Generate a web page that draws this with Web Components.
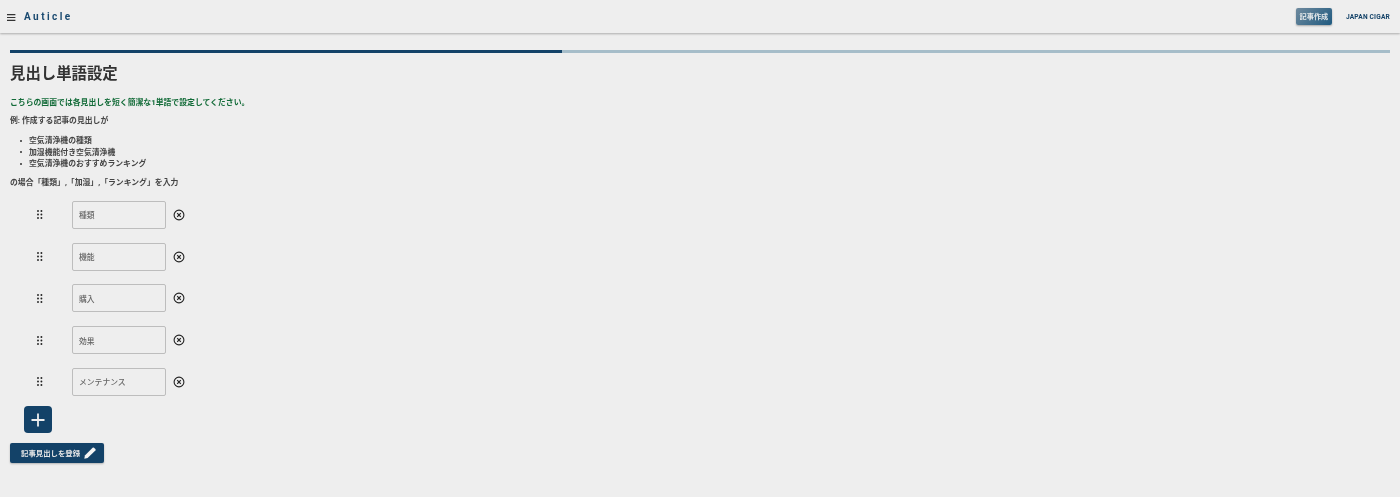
<!DOCTYPE html>
<html lang="ja"><head><meta charset="utf-8"><title>Auticle</title>
<style>
html,body{margin:0;padding:0;background:#eeeeee;height:100%;overflow:hidden}
body{font-family:Roboto,"Noto Sans CJK JP",sans-serif;color:#333;filter:blur(.35px)}
</style></head><body>
<app-header></app-header>
<app-page>
  <step-progress value="40"></step-progress>
  <h-title>見出し単語設定</h-title>
  <help-text></help-text>
  <word-list></word-list>
  <add-button></add-button>
  <submit-button>記事見出しを登録</submit-button>
</app-page>
<script>
const FONT='Roboto,"Noto Sans CJK JP",sans-serif';
function def(name,html,init){
  customElements.define(name,class extends HTMLElement{
    constructor(){super();this.attachShadow({mode:'open'}).innerHTML=html;}
    connectedCallback(){if(init)init(this);}
  });
}
def('app-header',`<style>
:host{display:flex;align-items:center;height:33px;box-sizing:border-box;background:#eeeeee;box-shadow:0 1px 2px rgba(0,0,0,.28);padding:0 10px 0 7px;font-family:${FONT}}
svg{display:block;width:9px;height:7px;margin-right:8px;margin-top:1px}
.logo{font-size:10px;font-weight:700;letter-spacing:2.45px;color:#1a4a70;flex:1}
.new{background:linear-gradient(135deg,#6f8a9e,#1f5a80);color:#e4e8ea;font-size:7.2px;font-weight:700;height:17px;width:36px;display:flex;align-items:center;justify-content:center;border-radius:2px;box-shadow:0 1px 2px rgba(0,0,0,.3);margin-right:14px;margin-top:-1px}
.user{font-size:6.6px;font-weight:700;color:#134268;letter-spacing:.2px}
</style><svg viewBox="0 0 9 7"><path d="M0 .6h8.4M0 3.5h8.4M0 6.4h8.4" stroke="#333" stroke-width="1.1" fill="none"/></svg>
<span class="logo">Auticle</span><span class="new">記事作成</span><span class="user">JAPAN CIGAR</span>`);
def('app-page',`<style>:host{display:flex;flex-direction:column;align-items:flex-start;padding:17px 10px 0}</style><slot></slot>`);
def('step-progress',`<style>:host{display:flex;width:100%;height:3px;background:#a6bdc9}
i{display:block;width:40%;background:#134268}</style><i></i>`);
def('h-title',`<style>:host{display:block;font-family:${FONT};font-size:15.4px;line-height:20px;font-weight:700;color:#333;margin-top:11px}</style><slot></slot>`);
def('help-text',`<style>
:host{display:block;font-family:${FONT};font-size:7.85px;font-weight:700;color:#444;margin-top:13px;line-height:11px}
p{margin:0}.g{color:#126b38;font-weight:700;margin-bottom:7px}
ul{margin:9px 0 7px;padding:0;line-height:11.5px;list-style:none}
li{display:flex;align-items:center}
li::before{content:"";width:2px;height:2px;border-radius:50%;background:#333;margin:0 7px 0 10px}
</style><p class="g">こちらの画面では各見出しを短く簡潔な1単語で設定してください。</p>
<p>例: 作成する記事の見出しが</p>
<ul><li>空気清浄機の種類</li><li>加湿機能付き空気清浄機</li><li>空気清浄機のおすすめランキング</li></ul>
<p>の場合「種類」,「加湿」,「ランキング」を入力</p>`);
def('word-row',`<style>
:host{display:flex;align-items:center;height:28px;margin-bottom:13.75px;font-family:${FONT}}
.h{width:6px;height:9px;margin:0 29px 0 27px;display:block}
.f{box-sizing:border-box;width:94px;height:28px;border:1px solid #bdbdbd;border-radius:2px;display:flex;align-items:center;padding-left:6px;font-size:7.8px;font-weight:500;color:#666}
.x{width:12px;height:12px;margin-left:7px;display:block}
</style><svg class="h" viewBox="0 0 6 9"><g fill="#222"><circle cx="1" cy="1" r=".95"/><circle cx="4.4" cy="1" r=".95"/><circle cx="1" cy="4.5" r=".95"/><circle cx="4.4" cy="4.5" r=".95"/><circle cx="1" cy="8" r=".95"/><circle cx="4.4" cy="8" r=".95"/></g></svg>
<div class="f"><slot></slot></div>
<svg class="x" viewBox="0 0 12 12"><circle cx="6" cy="6" r="4.9" fill="none" stroke="#222" stroke-width="1.1"/><path d="M4.2 4.2l3.6 3.6M7.8 4.2l-3.6 3.6" stroke="#222" stroke-width="1.2"/></svg>`);
def('word-list',`<style>:host{display:block;margin-top:13.25px}</style><word-row>種類</word-row><word-row>機能</word-row><word-row>購入</word-row><word-row>効果</word-row><word-row>メンテナンス</word-row>`);
def('add-button',`<style>:host{display:flex;align-items:center;justify-content:center;width:28px;height:27px;background:#134268;border-radius:4px;margin:-3.25px 0 0 14px}svg{width:16px;height:16px;display:block}</style>
<svg viewBox="0 0 16 16"><path d="M8 1.5v13M1.5 8h13" stroke="#eee" stroke-width="1.8" fill="none"/></svg>`);
def('submit-button',`<style>:host{display:flex;align-items:center;box-sizing:border-box;width:94px;height:20px;background:#134268;color:#e8e8e8;border-radius:2px;box-shadow:0 1px 2px rgba(0,0,0,.25);margin-top:10px;padding:0 0 1px 11px;font-family:${FONT};font-size:7.4px;font-weight:700}
svg{width:12px;height:12px;margin-left:4px;display:block}</style><slot></slot>
<svg viewBox="0 0 12 12"><path d="M.3 11.7l.6-3.3L8.6.7q.7-.6 1.4 0l1.4 1.4q.6.7 0 1.4L3.6 11.1z" fill="#f4f4f4"/></svg>`);
</script></body></html>
